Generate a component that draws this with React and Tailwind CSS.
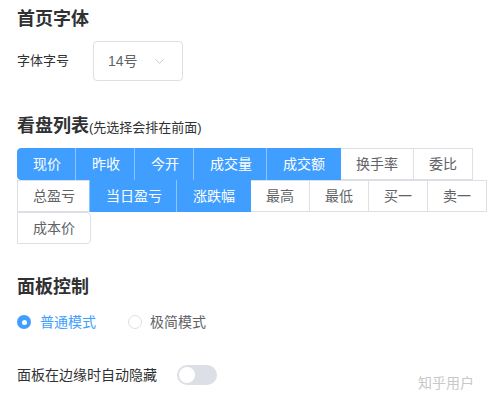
import { ChevronDown } from "lucide-react";

const COLUMNS = [
  { label: "现价", on: true },
  { label: "昨收", on: true },
  { label: "今开", on: true },
  { label: "成交量", on: true },
  { label: "成交额", on: true },
  { label: "换手率", on: false },
  { label: "委比", on: false },
  { label: "总盈亏", on: false },
  { label: "当日盈亏", on: true },
  { label: "涨跌幅", on: true },
  { label: "最高", on: false },
  { label: "最低", on: false },
  { label: "买一", on: false },
  { label: "卖一", on: false },
  { label: "成本价", on: false },
];

function ColumnButton({ item, first, last }) {
  return (
    <div
      className={`-ml-px h-[32px] px-[15px] flex items-center text-[14px] border ${
        item.on
          ? "relative z-10 bg-[#409eff] border-[#409eff] text-white shadow-[-1px_0_0_0_#8cc5ff]"
          : "bg-white border-[#dcdfe6] text-[#606266]"
      } ${first ? "rounded-l-[4px] shadow-none" : ""} ${last ? "rounded-r-[4px]" : ""}`}
    >
      {item.label}
    </div>
  );
}

export default function App() {
  return (
    <div
      className="relative w-[487px] h-[400px] bg-white overflow-hidden pl-[17px] pt-[7px] text-[#303133]"
      style={{ fontFamily: '"Liberation Sans", "Noto Sans CJK SC", sans-serif' }}
    >
      {/* 首页字体 */}
      <h2 className="text-[18px] leading-[24px] font-bold">首页字体</h2>
      <div className="mt-[10px] flex items-center">
        <span className="text-[13px] w-[76px]">字体字号</span>
        <div className="w-[90px] h-[40px] border border-[#dcdfe6] rounded-[4px] flex items-center pl-[14px] pr-[15px] justify-between">
          <span className="text-[14px] text-[#606266]">14号</span>
          <ChevronDown size={15} strokeWidth={1.5} className="text-[#c0c4cc]" />
        </div>
      </div>

      {/* 看盘列表 */}
      <h2 className="mt-[33px] text-[18px] leading-[24px] font-bold flex items-baseline">
        看盘列表
        <span className="text-[13px] font-normal">(先选择会排在前面)</span>
      </h2>
      <div className="mt-[8px] ml-px w-[471px] flex flex-wrap">
        {COLUMNS.map((c, i) => (
          <ColumnButton
            key={c.label}
            item={c}
            first={i === 0}
            last={i === COLUMNS.length - 1}
          />
        ))}
      </div>

      {/* 面板控制 */}
      <h2 className="mt-[31px] text-[18px] leading-[24px] font-bold">面板控制</h2>
      <div className="mt-[13px] flex items-center h-[20px] text-[14px]">
        <span className="w-[14px] h-[14px] rounded-full bg-[#409eff] flex items-center justify-center">
          <span className="w-[5px] h-[5px] rounded-full bg-white" />
        </span>
        <span className="ml-[9px] text-[#409eff]">普通模式</span>
        <span className="ml-[32px] w-[14px] h-[14px] rounded-full border border-[#dcdfe6] bg-white" />
        <span className="ml-[8px] text-[#606266]">极简模式</span>
      </div>

      <div className="mt-[33px] flex items-center h-[20px]">
        <span className="text-[14px] w-[160px]">面板在边缘时自动隐藏</span>
        <div className="w-[40px] h-[20px] rounded-full bg-[#dcdfe6] flex items-center px-[2px]">
          <span className="w-[16px] h-[16px] rounded-full bg-white" />
        </div>
      </div>

      <span className="absolute right-[13px] top-[373px] text-[14px] text-[#c8c8c8]">
        知乎用户
      </span>
    </div>
  );
}
